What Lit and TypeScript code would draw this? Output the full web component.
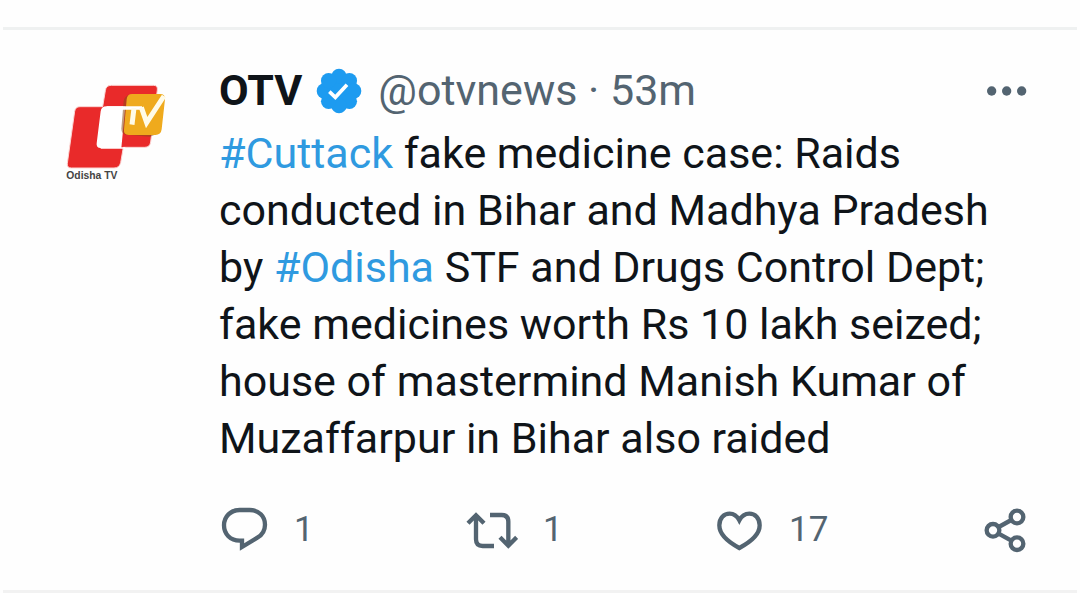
import { LitElement, html, css, svg } from "lit";
import { customElement } from "lit/decorators.js";

const BUMPS = [0, 45, 90, 135, 180, 225, 270, 315];

@customElement("app-root")
export class AppRoot extends LitElement {
  static styles = css`
    :host {
      display: block;
      padding: 27px 3px 0;
      background: #fefefe;
      color: #0f1419;
      font-family: Roboto, "Noto Sans", sans-serif;
      font-size: 43px;
      line-height: 57px;
    }
    .post {
      display: flex;
      align-items: flex-start;
      gap: 33px;
      padding: 32px 49px 37px 45px;
      border-top: 3px solid #eff1f1;
      border-bottom: 3px solid #f2f2f2;
    }
    .avatar {
      flex: none;
      width: 138px;
      height: 138px;
      border-radius: 50%;
      background: #fefefe;
    }
    .content {
      flex: 1;
      min-width: 0;
    }
    .head {
      display: flex;
      align-items: center;
      height: 57px;
    }
    .name {
      font-weight: 700;
      color: inherit;
    }
    .badge {
      flex: none;
      width: 46px;
      height: 46px;
      margin: 0 16px 0 14px;
    }
    .meta {
      color: #536471;
    }
    a {
      color: inherit;
      text-decoration: none;
    }
    button {
      display: flex;
      align-items: center;
      padding: 0;
      border: 0;
      background: none;
      color: #536471;
      font: inherit;
      font-size: 35px;
      line-height: 46px;
      cursor: pointer;
    }
    .more {
      margin-left: auto;
    }
    .text {
      margin: 6px 0 0;
      white-space: nowrap;
    }
    .tag {
      color: #2f9ae0;
    }
    .actions {
      display: grid;
      grid-template-columns: 247fr 250fr 266fr 46px;
      margin-top: 40px;
    }
    .actions button {
      gap: 25px;
    }
    .actions svg,
    .more svg {
      display: block;
      flex: none;
      fill: none;
      stroke: currentColor;
      stroke-width: 13;
    }
  `;

  private logo() {
    return html`<svg class="avatar" viewBox="24 6 414 414" role="img" aria-label="Odisha TV">
      <path d="M214 76H340Q354 76 352 90L332 246Q330 262 314 262H250L242 308Q238 324 222 324H94Q80 324 82 310L104 154Q106 140 120 140H188L196 92Q198 76 214 76Z"
        fill="#e92a2a" stroke="#fbd5d3" stroke-width="3" />
      <path d="M200 139H256L244 264H182Q168 264 170 250L182 154Q184 139 200 139Z" fill="#fff" />
      <path d="M182 264H256" stroke="#fff" stroke-width="5" />
      <path d="M266 106Q253 110 251 124L244 206Q244 222 260 224L330 230L350 222Z" fill="#8a4a18" opacity=".55" />
      <path d="M276 102H360Q376 102 375 118L365 208Q363 225 346 225H266Q250 225 252 208L260 118Q262 102 276 102Z" fill="#efaa1d" />
      <path d="M200 144H306" stroke="#fff" stroke-width="10" fill="none" />
      <path d="M282 144L276 194M304 142L320 188L372 108" stroke="#fffbe8" stroke-width="15" fill="none" />
      <text x="79" y="356" font-family="Liberation Sans, sans-serif" font-weight="700" font-size="31" fill="#444">Odisha TV</text>
    </svg>`;
  }

  private badge() {
    return html`<svg class="badge" viewBox="-69 -69 138 138" role="img" aria-label="Verified account">
      <g fill="#1d9bf0">
        <circle r="54" />
        ${BUMPS.map((a) => svg`<circle cy="-44" r="23" transform=${`rotate(${a})`} />`)}
      </g>
      <path d="M-29 2L-11 19L24 -19" fill="none" stroke="#fff" stroke-width="11" />
    </svg>`;
  }

  render() {
    return html`<article class="post">
      ${this.logo()}
      <div class="content">
        <header class="head">
          <a class="name" href="#otvnews">OTV</a>
          ${this.badge()}
          <span class="meta"><a href="#otvnews">@otvnews</a> · <time>53m</time></span>
          <button class="more" aria-label="More">
            <svg width="42" height="16" viewBox="0 0 126 48">
              <g fill="currentColor" stroke="none">
                <circle cx="17" cy="24" r="14" /><circle cx="62" cy="24" r="14" /><circle cx="107" cy="24" r="14" />
              </g>
            </svg>
          </button>
        </header>
        <p class="text">
          <a class="tag" href="#Cuttack">#Cuttack</a> fake medicine case: Raids<br />
          conducted in Bihar and Madhya Pradesh<br />
          by <a class="tag" href="#Odisha">#Odisha</a> STF and Drugs Control Dept;<br />
          fake medicines worth Rs 10 lakh seized;<br />
          house of mastermind Manish Kumar of<br />
          Muzaffarpur in Bihar also raided
        </p>
        <div class="actions">
          <button aria-label="Reply, 1">
            <svg width="50" height="46" viewBox="30 33 150 138">
              <path d="M92 42H122C150 42 168 62 168 86C168 103 159 117 145 125L99 153V134H92C64 134 45 114 45 88C45 62 65 42 92 42Z" />
            </svg>
            1
          </button>
          <button aria-label="Repost, 1">
            <svg width="52" height="46" viewBox="36 33 156 138">
              <path d="M42 82L66 58L90 82M66 58V130Q66 150 86 150H120M108 57H143Q163 57 163 77V148M138 124L163 149L188 124" />
            </svg>
            1
          </button>
          <button aria-label="Like, 17">
            <svg width="48" height="46" viewBox="36 33 144 138">
              <path d="M106 73C98 58 86 53 77 53C60 53 46 66 46 88C46 114 70 137 106 156C142 137 167 114 167 88C167 66 153 53 136 53C126 53 114 58 106 73Z" />
            </svg>
            17
          </button>
          <button aria-label="Share">
            <svg width="46" height="46" viewBox="36 33 138 138">
              <circle cx="69" cy="103" r="19" /><circle cx="141" cy="63" r="19" /><circle cx="141" cy="143" r="19" />
              <path d="M86 93L124 72M86 113L124 134" />
            </svg>
          </button>
        </div>
      </div>
    </article>`;
  }
}
